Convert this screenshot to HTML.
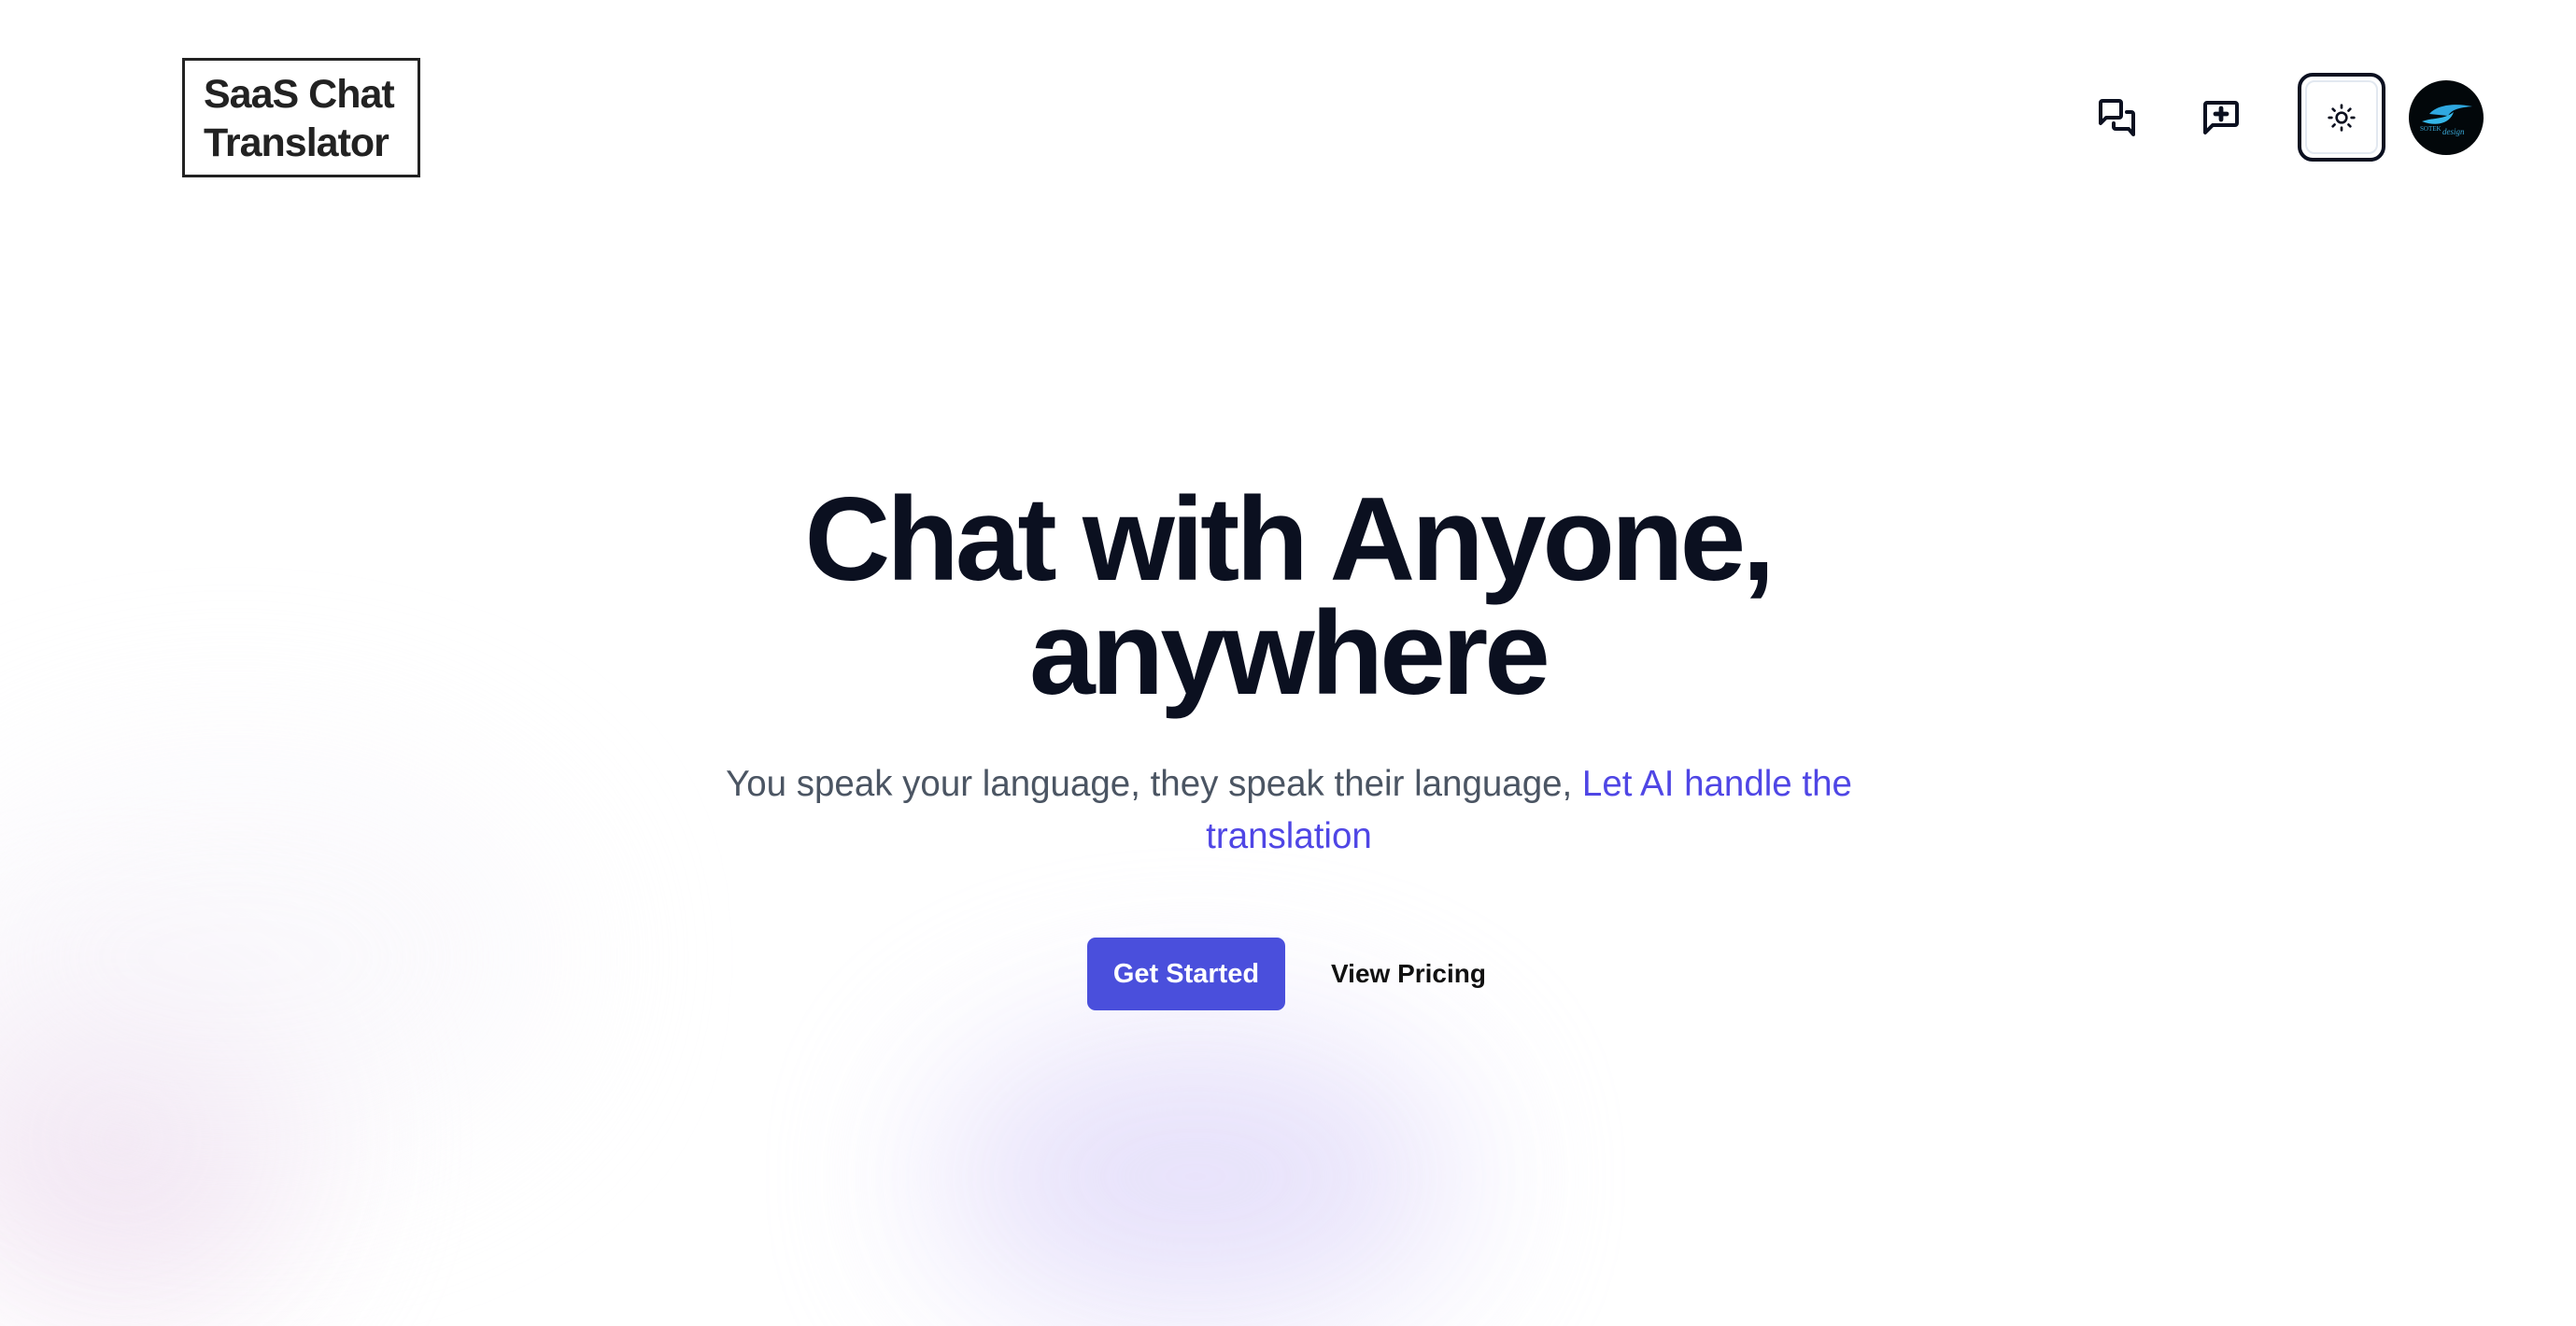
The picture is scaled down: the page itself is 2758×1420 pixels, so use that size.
<!DOCTYPE html>
<html><head><meta charset="utf-8"><style>
*{margin:0;padding:0;box-sizing:border-box}
html,body{width:2758px;height:1232px;overflow:hidden;background:#fff;font-family:"Liberation Sans",sans-serif}
.blob{position:absolute;border-radius:50%;filter:blur(90px)}
.logo{position:absolute;left:195px;top:62px;width:255px;height:128px;border:3px solid #222;padding:10px 0 0 20px;font-weight:bold;font-size:43px;line-height:52px;color:#222;letter-spacing:-1px}
h1{position:absolute;left:0;width:2758px;top:516px;text-align:center;font-size:127px;line-height:122px;font-weight:bold;color:#0b1020;letter-spacing:-4px}
.sub{position:absolute;left:740px;width:1280px;top:812px;text-align:center;font-size:38.5px;line-height:56px;color:#4b5563}
.sub span{color:#4f46e5}
.btn{position:absolute;left:1164px;top:1004px;width:212px;height:78px;background:#4a4fdc;border-radius:9px;color:#fff;font-weight:bold;font-size:29px;line-height:78px;text-align:center}
.vp{position:absolute;left:1425px;top:1004px;line-height:78px;font-weight:bold;font-size:28px;color:#111}
.ic{position:absolute}
</style></head><body>
<div class="blob" style="left:-60px;top:1040px;width:380px;height:360px;background:#efe0f0;opacity:.9"></div>
<div class="blob" style="left:1000px;top:1100px;width:560px;height:320px;background:#e4defa;opacity:.9"></div>
<div class="blob" style="left:-100px;top:800px;width:700px;height:450px;background:#f8f6fb;opacity:.6"></div>
<div class="logo">SaaS Chat<br>Translator</div>

<svg class="ic" style="left:2243px;top:102px" width="48" height="48" viewBox="0 0 24 24" fill="none" stroke="#0b1020" stroke-width="2" stroke-linejoin="round" stroke-linecap="round"><path d="M3 15V4a1 1 0 0 1 1-1h9a1 1 0 0 1 1 1v7a1 1 0 0 1-1 1H6z"/><path d="M17 9h2.5a1 1 0 0 1 1 1v11L18 18h-7a1 1 0 0 1-1-1v-2"/></svg>
<svg class="ic" style="left:2355px;top:102px" width="48" height="48" viewBox="0 0 24 24" fill="none" stroke="#0b1020" stroke-width="2" stroke-linejoin="round" stroke-linecap="round"><path d="M3 20V5a1 1 0 0 1 1-1h15a1 1 0 0 1 1 1v10a1 1 0 0 1-1 1H7z"/><path d="M11.5 7v6M8.5 10h6" stroke-width="2.4"/></svg>
<div style="position:absolute;left:2460px;top:78px;width:94px;height:95px;border:4px solid #0b1020;border-radius:16px"><div style="position:absolute;inset:4px;border:2px solid #e2e8f0;border-radius:10px"></div></div>
<svg class="ic" style="left:2491px;top:110px" width="32" height="32" viewBox="0 0 24 24" fill="none" stroke="#0b1020" stroke-width="2" stroke-linecap="round"><circle cx="12" cy="12" r="4"/><path d="M12 2v2M12 20v2M2 12h2M20 12h2M5 5l1.4 1.4M17.6 17.6L19 19M5 19l1.4-1.4M17.6 6.4L19 5"/></svg>
<div style="position:absolute;left:2579px;top:86px;width:80px;height:80px;border-radius:50%;background:#02070a;overflow:hidden">
<svg width="80" height="80" viewBox="0 0 80 80"><path d="M22 36 C30 26 50 24 68 28 C55 29 46 31 42 38 Z" fill="#2fa8e0"/><path d="M14 44 C25 40 38 42 48 34 C44 46 30 50 14 44Z" fill="#34b6e8"/><text x="12" y="54" font-size="7" fill="#3aa9d8" font-family="Liberation Serif">SOTEK</text><text x="36" y="58" font-size="9" font-style="italic" fill="#3aa9d8" font-family="Liberation Serif">design</text></svg></div>

<h1>Chat with Anyone,<br>anywhere</h1>
<div class="sub">You speak your language, they speak their language, <span>Let AI handle the translation</span></div>
<div class="btn">Get Started</div>
<div class="vp">View Pricing</div>
</body></html>
